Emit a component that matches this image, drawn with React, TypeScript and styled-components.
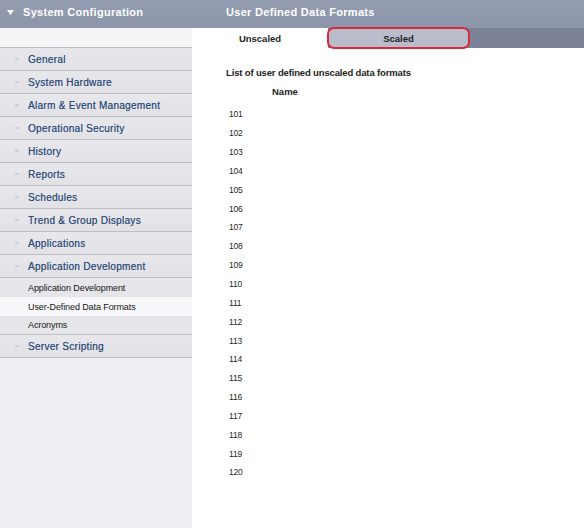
import { FunctionComponent } from 'react';
import styled, { createGlobalStyle } from 'styled-components';

const GlobalStyle = createGlobalStyle`
    html, body {
        margin: 0;
        padding: 0;
        background: #ffffff;
        font-family: 'Liberation Sans', Arial, sans-serif;
    }
`;

const Page = styled.div`
    display: flex;
    width: 584px;
    height: 528px;
    overflow: hidden;
`;

const Sidebar = styled.aside`
    width: 192px;
    flex-shrink: 0;
    background: #efeef3;
    display: flex;
    flex-direction: column;
`;

const HeaderBar = styled.div<{ $indent: number }>`
    height: 28px;
    background: linear-gradient(#939cb0, #8c95a9);
    color: #ffffff;
    font-weight: bold;
    font-size: 11px;
    letter-spacing: 0.3px;
    display: flex;
    align-items: center;
    gap: 9px;
    padding: 0 0 4px ${(p) => p.$indent}px;
    box-sizing: border-box;
`;

const Spacer = styled.div`
    height: 20px;
    background: #f4f4f7;
    border-bottom: 1px solid #bdbdc2;
    box-sizing: border-box;
`;

const NavItem = styled.div`
    height: 23px;
    box-sizing: border-box;
    border-bottom: 1px solid #bdbdc2;
    background: linear-gradient(#e8e8ec, #e1e1e6);
    display: flex;
    align-items: center;
    padding-left: 15px;
    gap: 9px;
    color: #2a4a78;
    font-size: 10px;
    letter-spacing: 0.3px;
    text-shadow: 0.15px 0 0 rgba(42, 74, 120, 0.6);
`;

const Bullet = styled.span`
    width: 4px;
    height: 2px;
    background: #cfcfd4;
`;

const SubItem = styled.div<{ $active?: boolean }>`
    height: 19px;
    display: flex;
    align-items: center;
    padding-left: 28px;
    font-size: 9px;
    color: #151515;
    background: ${(p) => (p.$active ? '#f8f8fa' : '#e6e6ea')};
    letter-spacing: -0.1px;
    &:last-child {
        height: 18px;
    }
`;

const SubList = styled.div`
    display: flex;
    flex-direction: column;
    border-bottom: 1px solid #bdbdc2;
`;

const Main = styled.main`
    flex: 1;
    display: flex;
    flex-direction: column;
`;

const TabBar = styled.div`
    height: 20px;
    display: flex;
    background: #7c8399;
`;

const Tab = styled.div<{ $selected?: boolean }>`
    width: ${(p) => (p.$selected ? 136 : 143)}px;
    box-sizing: border-box;
    display: flex;
    align-items: center;
    justify-content: center;
    font-size: 9.5px;
    font-weight: bold;
    color: #1e1e1e;
    background: ${(p) => (p.$selected ? '#ffffff' : '#b9bdcb')};
    ${(p) =>
        !p.$selected &&
        `
        border: 2px solid #d9283c;
        border-radius: 7px;
        margin: -1px 0 -1px -1px;
        height: 22px;
    `}
`;

const Content = styled.div`
    padding: 19px 0 0 34px;
`;

const ListTitle = styled.div`
    font-size: 9.5px;
    font-weight: bold;
    color: #1d1d1d;
    letter-spacing: -0.15px;
`;

const ColumnHead = styled.div`
    margin: 8px 0 8px 46px;
    font-size: 9.5px;
    font-weight: bold;
    color: #1d1d1d;
`;

const Rows = styled.div`
    display: flex;
    flex-direction: column;
    padding-left: 3px;
`;

const Row = styled.div`
    height: 18.85px;
    display: flex;
    align-items: center;
    font-size: 8.5px;
    color: #262626;
    letter-spacing: -0.2px;
`;

const Triangle: FunctionComponent = () => (
    <svg width="7" height="5" viewBox="0 0 7 5">
        <polygon points="0,0 7,0 3.5,5" fill="#ffffff" />
    </svg>
);

const navTop = [
    'General',
    'System Hardware',
    'Alarm & Event Management',
    'Operational Security',
    'History',
    'Reports',
    'Schedules',
    'Trend & Group Displays',
    'Applications',
    'Application Development',
];

const subItems = ['Application Development', 'User-Defined Data Formats', 'Acronyms'];

const formats = Array.from({ length: 20 }, (_, i) => 101 + i);

const App: FunctionComponent = () => {
    return (
        <>
            <GlobalStyle />
            <Page>
                <Sidebar>
                    <HeaderBar $indent={7}>
                        <Triangle />
                        System Configuration
                    </HeaderBar>
                    <Spacer />
                    {navTop.map((item) => (
                        <NavItem key={item}>
                            <Bullet />
                            {item}
                        </NavItem>
                    ))}
                    <SubList>
                        {subItems.map((item) => (
                            <SubItem key={item} $active={item === 'User-Defined Data Formats'}>
                                {item}
                            </SubItem>
                        ))}
                    </SubList>
                    <NavItem>
                        <Bullet />
                        Server Scripting
                    </NavItem>
                </Sidebar>
                <Main>
                    <HeaderBar $indent={34}>User Defined Data Formats</HeaderBar>
                    <TabBar>
                        <Tab $selected>Unscaled</Tab>
                        <Tab>Scaled</Tab>
                    </TabBar>
                    <Content>
                        <ListTitle>List of user defined unscaled data formats</ListTitle>
                        <ColumnHead>Name</ColumnHead>
                        <Rows>
                            {formats.map((n) => (
                                <Row key={n}>{n}</Row>
                            ))}
                        </Rows>
                    </Content>
                </Main>
            </Page>
        </>
    );
};

export default App;
